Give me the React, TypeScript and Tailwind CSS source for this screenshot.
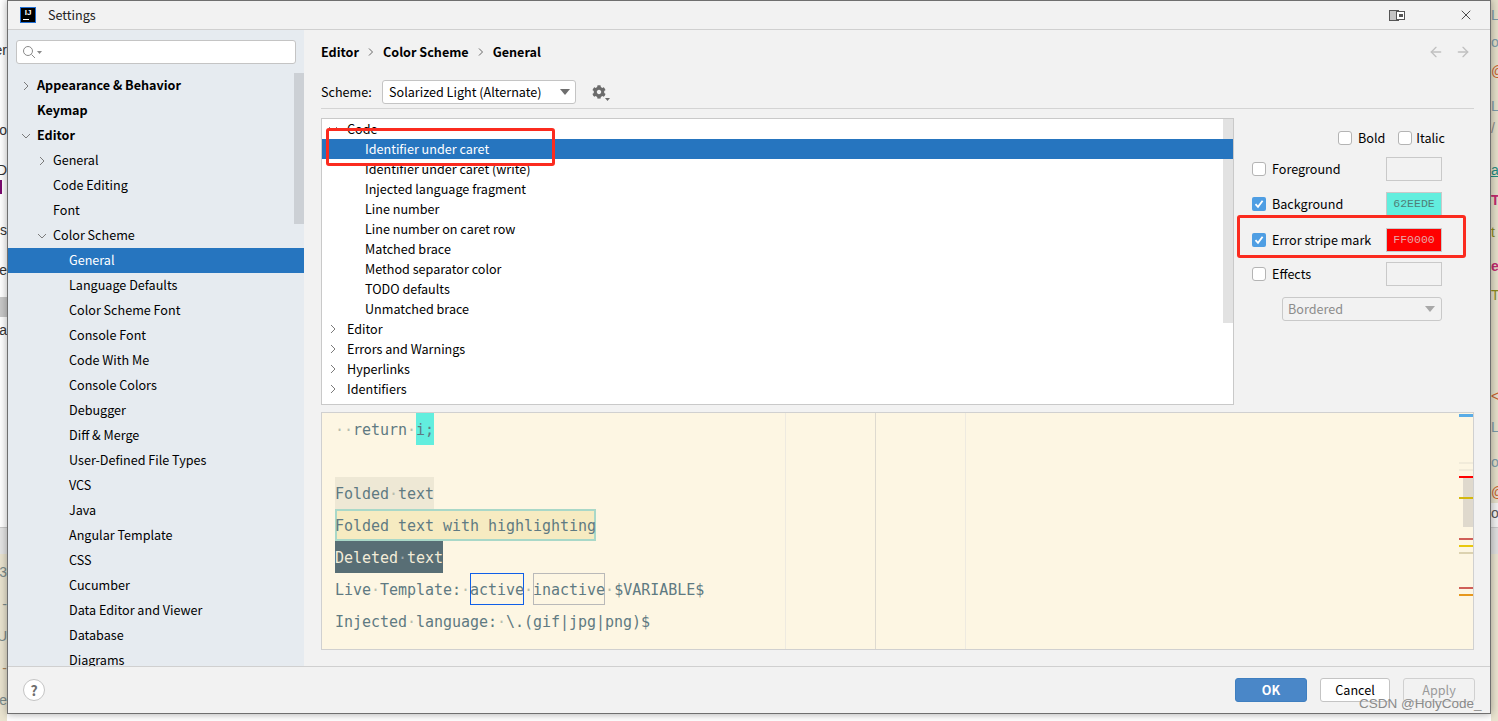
import React from "react";
import { ArrowLeft, ArrowRight, X } from "lucide-react";
import { FaCog } from "react-icons/fa";

const Right = ({ className = "" }: { className?: string }) => (
  <svg width="10" height="10" viewBox="0 0 10 10" className={className}><path d="M3 1 L7 5 L3 9" fill="none" stroke="#7b7b7b" strokeWidth="1" /></svg>
);
const Down = ({ className = "" }: { className?: string }) => (
  <svg width="10" height="10" viewBox="0 0 10 10" className={className}><path d="M1 3 L5 7 L9 3" fill="none" stroke="#7b7b7b" strokeWidth="1" /></svg>
);
const Caret = ({ color = "#6e6e6e" }: { color?: string }) => (
  <svg width="10" height="6" viewBox="0 0 10 6"><path d="M0 0 H10 L5 6 Z" fill={color} /></svg>
);

const Check = ({ on = false }: { on?: boolean }) =>
  on ? (
    <span className="flex h-[14px] w-[14px] shrink-0 items-center justify-center rounded-[2px] bg-[#4f9ee3]">
      <svg width="12" height="12" viewBox="0 0 12 12"><path d="M2.5 6.2 L5 8.8 L9.6 2.8" fill="none" stroke="#fff" strokeWidth="1.8" /></svg>
    </span>
  ) : (
    <span className="h-[14px] w-[14px] shrink-0 rounded-[3px] border border-[#b4b4b4] bg-white" />
  );

type Side = { t: string; l: 0 | 1 | 2; b?: boolean; c?: "r" | "d"; sel?: boolean };
const side: Side[] = [
  { t: "Appearance & Behavior", l: 0, b: true, c: "r" },
  { t: "Keymap", l: 0, b: true },
  { t: "Editor", l: 0, b: true, c: "d" },
  { t: "General", l: 1, c: "r" },
  { t: "Code Editing", l: 1 },
  { t: "Font", l: 1 },
  { t: "Color Scheme", l: 1, c: "d" },
  { t: "General", l: 2, sel: true },
  { t: "Language Defaults", l: 2 },
  { t: "Color Scheme Font", l: 2 },
  { t: "Console Font", l: 2 },
  { t: "Code With Me", l: 2 },
  { t: "Console Colors", l: 2 },
  { t: "Debugger", l: 2 },
  { t: "Diff & Merge", l: 2 },
  { t: "User-Defined File Types", l: 2 },
  { t: "VCS", l: 2 },
  { t: "Java", l: 2 },
  { t: "Angular Template", l: 2 },
  { t: "CSS", l: 2 },
  { t: "Cucumber", l: 2 },
  { t: "Data Editor and Viewer", l: 2 },
  { t: "Database", l: 2 },
  { t: "Diagrams", l: 2 },
];

type TreeRow = { t: string; c?: "r" | "d"; child?: boolean; sel?: boolean };
const tree: TreeRow[] = [
  { t: "Code", c: "d" },
  { t: "Identifier under caret", child: true, sel: true },
  { t: "Identifier under caret (write)", child: true },
  { t: "Injected language fragment", child: true },
  { t: "Line number", child: true },
  { t: "Line number on caret row", child: true },
  { t: "Matched brace", child: true },
  { t: "Method separator color", child: true },
  { t: "TODO defaults", child: true },
  { t: "Unmatched brace", child: true },
  { t: "Editor", c: "r" },
  { t: "Errors and Warnings", c: "r" },
  { t: "Hyperlinks", c: "r" },
  { t: "Identifiers", c: "r" },
];

const Dot = () => <span className="text-[#b9bdb0]">·</span>;

const Swatch = ({ className, children }: { className: string; children?: React.ReactNode }) => (
  <span className={`flex h-[24px] w-[56px] items-center justify-center border border-[#c9c9c9] font-['Liberation_Mono',monospace] text-[11.5px] ${className}`}>{children}</span>
);

const ColorRow = ({ label, on, swatch, mt }: { label: string; on?: boolean; swatch: React.ReactNode; mt: string }) => (
  <div className={`flex h-[24px] items-center ${mt}`}>
    <Check on={on} />
    <span className="ml-[6px] flex-1">{label}</span>
    {swatch}
  </div>
);

const LeftBits = () => (
  <div className="absolute left-0 top-0 h-[721px] w-[7px] overflow-hidden bg-white font-['Liberation_Sans',sans-serif] text-[14px] text-[#333]">
    <span className="absolute right-0 top-[40px] whitespace-nowrap">er</span>
    <span className="absolute right-0 top-[120px] whitespace-nowrap">o</span>
    <span className="absolute right-0 top-[160px] whitespace-nowrap">ID</span>
    <span className="absolute left-0 top-[180px] h-[14px] w-[2px] bg-[#7a0a6e]" />
    <span className="absolute right-0 top-[220px] whitespace-nowrap">Ps</span>
    <span className="absolute right-0 top-[260px] whitespace-nowrap">re</span>
    <span className="absolute left-0 top-[297px] h-[20px] w-[7px] bg-[#c8c8c8]" />
    <span className="absolute right-0 top-[320px] whitespace-nowrap">ca</span>
    <span className="absolute left-0 top-[527px] h-[27px] w-[7px] border-t border-[#c8c8c8] bg-[#e4e4e4]" />
    <span className="absolute left-0 top-[554px] h-[167px] w-[7px] bg-[#e9e3cf]" />
    <span className="absolute right-0 top-[562px] whitespace-nowrap text-[#7a8a8a]">3</span>
    <span className="absolute right-0 top-[594px] whitespace-nowrap text-[#7a8a8a]">-</span>
    <span className="absolute right-0 top-[626px] whitespace-nowrap text-[#7a8a8a]">U</span>
    <span className="absolute right-0 top-[658px] whitespace-nowrap text-[#a8845a]">-</span>
    <span className="absolute right-0 top-[690px] whitespace-nowrap text-[#7a8a8a]">e</span>
  </div>
);

const RightBits = () => (
  <div className="absolute left-[1491px] top-0 h-[721px] w-[7px] overflow-hidden bg-[#e4dec9] font-['Liberation_Sans',sans-serif] text-[14px]">
    <span className="absolute left-0 top-[5px] text-[#7a9aa8]">L</span>
    <span className="absolute left-0 top-[32px] text-[#7a9aa8]">o</span>
    <span className="absolute left-0 top-[61px] text-[#c8602e]">@</span>
    <span className="absolute left-0 top-[96px] text-[#7a9aa8]">L</span>
    <span className="absolute left-0 top-[118px] text-[#8a8a8a]">/</span>
    <span className="absolute left-0 top-[160px] text-[#1f8a80] underline">av</span>
    <span className="absolute left-0 top-[190px] font-bold text-[#c0286e]">T</span>
    <span className="absolute left-0 top-[222px] text-[#8a8a20]">t</span>
    <span className="absolute left-0 top-[256px] font-bold text-[#c0286e]">e</span>
    <span className="absolute left-0 top-[285px] text-[#8a8a20]">T</span>
    <span className="absolute left-0 top-[386px] text-[#c8602e]">&lt;</span>
    <span className="absolute left-0 top-[417px] text-[#7a9aa8]">L</span>
    <span className="absolute left-0 top-[452px] text-[#7a9aa8]">o</span>
    <span className="absolute left-0 top-[482px] text-[#c8602e]">@</span>
    <span className="absolute left-0 top-[503px] h-[24px] w-[7px] bg-[#f1f1f1] text-[#555]">or</span>
    <span className="absolute left-0 top-[527px] h-[27px] w-[7px] border-t border-[#c8c8c8] bg-[#dedede]" />
    <span className="absolute left-0 top-[554px] h-[167px] w-[7px] bg-[#e9e3cf]" />
  </div>
);

export default function App() {
  return (
    <div className="relative h-[721px] w-[1498px] overflow-hidden bg-white font-['Noto_Sans_CJK_SC',sans-serif] text-[12.6px] text-black">
      <LeftBits />
      <RightBits />

      <div className="absolute left-[7px] top-0 flex h-[714px] w-[1484px] flex-col border border-[#6f6f6f] bg-[#f2f2f2] shadow-[0_0_8px_rgba(0,0,0,0.35)]">
        {/* title bar */}
        <div className="flex h-[29px] shrink-0 items-center border-b border-[#d0d0d0] pl-[12px] pr-[16px]">
          <span className="relative flex h-[16px] w-[16px] items-start justify-center border border-[#1f6fd6] bg-black pt-[0px] font-['Liberation_Sans',sans-serif] text-[8px] font-bold leading-[10px] text-white">
            IJ
            <span className="absolute bottom-[2px] left-[2px] h-[1px] w-[6px] bg-white" />
          </span>
          <span className="ml-[12px] text-[#222]">Settings</span>
          <span className="ml-auto mr-[53px] flex items-center">
            <svg width="16" height="11" viewBox="0 0 16 11"><rect x="0.5" y="0.5" width="9" height="10" fill="#fff" stroke="#555" /><path d="M2 1 V10 M4 1 V10 M6 1 V10" stroke="#888" /><rect x="7.5" y="1.5" width="8" height="8" fill="#fff" stroke="#555" /><rect x="10" y="4" width="4" height="3" fill="#555" /></svg>
          </span>
          <X size={16} strokeWidth={1.2} color="#222" />
        </div>

        {/* body */}
        <div className="flex min-h-0 flex-1">
          <aside className="relative flex w-[296px] shrink-0 flex-col overflow-hidden bg-[#e6ebf0]">
            <div className="mx-[8px] mt-[10px] flex h-[24px] shrink-0 items-center gap-[1px] rounded-[3px] border border-[#c4c4c4] bg-white pl-[5px]">
              <svg width="14" height="14" viewBox="0 0 14 14"><circle cx="6" cy="6" r="4.5" fill="none" stroke="#8a8a8a" /><path d="M9.5 9.5 L13 13" stroke="#8a8a8a" /></svg>
              <svg width="5" height="3" viewBox="0 0 5 3"><path d="M0 0 H5 L2.5 3 Z" fill="#8a8a8a" /></svg>
            </div>
            <div className="mt-[9px] flex flex-col">
              {side.map((s, i) => (
                <div key={i} className={`relative flex h-[25px] shrink-0 items-center ${s.sel ? "bg-[#2675bf] text-white" : ""}`}>
                  {s.c === "r" && <Right className={`absolute ${s.l === 0 ? "left-[13px]" : "left-[29px]"}`} />}
                  {s.c === "d" && <Down className={`absolute ${s.l === 0 ? "left-[13px]" : "left-[29px]"}`} />}
                  <span className={`${s.l === 0 ? "pl-[29px]" : s.l === 1 ? "pl-[45px]" : "pl-[61px]"} ${s.b ? "font-bold" : ""}`}>{s.t}</span>
                </div>
              ))}
            </div>
            <span className="absolute left-[286px] top-[43px] h-[151px] w-[10px] bg-[#ccd0d5]" />
          </aside>

          <main className="flex min-w-0 flex-1 flex-col pl-[17px] pr-[16px]">
            <div className="mt-[12px] flex h-[20px] items-center font-bold">
              <span>Editor</span>
              <svg width="6" height="8" viewBox="0 0 6 8" className="mx-[9px]"><path d="M1 0.5 L4.5 4 L1 7.5" fill="none" stroke="#666" /></svg>
              <span>Color Scheme</span>
              <svg width="6" height="8" viewBox="0 0 6 8" className="mx-[9px]"><path d="M1 0.5 L4.5 4 L1 7.5" fill="none" stroke="#666" /></svg>
              <span>General</span>
              <span className="ml-auto flex items-center gap-[11px] pr-[3px]">
                <ArrowLeft size={16} strokeWidth={2} color="#c0c0c0" />
                <ArrowRight size={16} strokeWidth={2} color="#c0c0c0" />
              </span>
            </div>

            <div className="mt-[18px] flex h-[24px] items-center">
              <span className="w-[61px]">Scheme:</span>
              <div className="flex h-[24px] w-[194px] items-center justify-between rounded-[3px] border border-[#c4c4c4] bg-white pl-[6px] pr-[5px]">
                <span>Solarized Light (Alternate)</span>
                <Caret />
              </div>
              <span className="relative ml-[16px] flex items-center">
                <FaCog size={14} color="#6b6b6b" />
                <svg width="5" height="3" viewBox="0 0 5 3" className="absolute left-[13px] top-[13px]"><path d="M0 0 H5 L2.5 3 Z" fill="#6b6b6b" /></svg>
              </span>
            </div>

            <div className="mt-[4px] h-[1px] shrink-0 bg-[#d4d4d4]" />

            <div className="mt-[9px] flex h-[287px] shrink-0">
              <div className="relative h-[287px] w-[913px] shrink-0 overflow-hidden border border-[#c9c9c9] bg-white">
                <span className="absolute right-0 top-0 h-[204px] w-[10px] bg-[#e2e2e2]" />
                {tree.map((r, i) => (
                  <div key={i} className={`relative flex h-[20px] items-center ${r.sel ? "bg-[#2675bf] text-white" : ""}`}>
                    {r.c === "r" && <Right className="absolute left-[6px]" />}
                    {r.c === "d" && <Down className="absolute left-[6px]" />}
                    <span className={r.child ? "pl-[43px]" : "pl-[25px]"}>{r.t}</span>
                  </div>
                ))}
              </div>

              <div className="flex flex-1 flex-col pl-[18px] pr-[32px]">
                <div className="mt-[12px] flex h-[16px] items-center justify-end">
                  <Check />
                  <span className="ml-[6px] mr-[13px]">Bold</span>
                  <Check />
                  <span className="ml-[4px] mr-[-3px]">Italic</span>
                </div>
                <ColorRow mt="mt-[11px]" label="Foreground" swatch={<Swatch className="bg-[#f2f2f2]" />} />
                <ColorRow mt="mt-[11px]" label="Background" on swatch={<Swatch className="bg-[#62eede] text-[#4f8078]">62EEDE</Swatch>} />
                <ColorRow mt="mt-[12px]" label="Error stripe mark" on swatch={<Swatch className="bg-[#ff0000] text-[#e8a8a8]">FF0000</Swatch>} />
                <ColorRow mt="mt-[10px]" label="Effects" swatch={<Swatch className="bg-[#f2f2f2]" />} />
                <div className="ml-[30px] mt-[11px] flex h-[24px] items-center justify-between rounded-[3px] border border-[#c9c9c9] pl-[5px] pr-[6px] text-[#8c8c8c]">
                  <span>Bordered</span>
                  <Caret color="#a8a8a8" />
                </div>
              </div>
            </div>

            {/* preview */}
            <div className="relative mt-[7px] h-[238px] shrink-0 overflow-hidden border border-[#d0d0d0] bg-[#fdf6e3] font-['DejaVu_Sans_Mono',monospace] text-[15px] leading-[34px] tracking-[-0.03px] text-[#5f7a82]">
              <span className="absolute left-[463px] top-0 h-full w-[1px] bg-[#eeeae0]" />
              <span className="absolute left-[553px] top-0 h-full w-[1px] bg-[#dedad0]" />
              <span className="absolute left-[643px] top-0 h-full w-[1px] bg-[#eeeae0]" />

              <div className="relative flex flex-col whitespace-pre pl-[13px]">
                <div className="flex h-[32px]"><Dot /><Dot /><span>return</span><Dot /><span className="h-[32px] bg-[#62eede]">i;</span></div>
                <div className="h-[32px]" />
                <div className="flex h-[32px]"><span className="h-[32px] bg-[#eee8d5]">Folded<Dot />text</span></div>
                <div className="flex h-[32px]"><span className="h-[32px] bg-[#f6ebc1] shadow-[inset_0_0_0_2px_#a9d8c8]">Folded text with highlighting</span></div>
                <div className="flex h-[32px]"><span className="h-[32px] bg-[#586e75] text-[#f3ecd8]">Deleted<span className="text-[#9aa8a8]">·</span>text</span></div>
                <div className="flex h-[32px]"><span>Live</span><Dot /><span>Template:</span><Dot /><span className="h-[32px] shadow-[inset_0_0_0_1px_#0f5fe8]">active</span><Dot /><span className="h-[32px] shadow-[inset_0_0_0_1px_#b9b9b9]">inactive</span><Dot /><span>$VARIABLE$</span></div>
                <div className="flex h-[32px]"><span>Injected</span><Dot /><span>language:</span><Dot /><span>\.(gif|jpg|png)$</span></div>
              </div>

              <span className="absolute right-0 top-[64px] h-[50px] w-[10px] bg-[#dfd9cd]" />
              <span className="absolute right-0 top-[1px] h-[3px] w-[14px] bg-[#5aace6]" />
              <span className="absolute right-0 top-[49px] h-[2px] w-[14px] bg-[#f1ebda]" />
              <span className="absolute right-0 top-[56px] h-[2px] w-[14px] bg-[#f1ebda]" />
              <span className="absolute right-0 top-[63px] h-[2px] w-[14px] bg-[#ff0000]" />
              <span className="absolute right-0 top-[84px] h-[2px] w-[14px] bg-[#d4b80f]" />
              <span className="absolute right-0 top-[125px] h-[2px] w-[14px] bg-[#cf5f58]" />
              <span className="absolute right-0 top-[132px] h-[2px] w-[14px] bg-[#e8c80e]" />
              <span className="absolute right-0 top-[139px] h-[2px] w-[14px] bg-[#dcd2b0]" />
              <span className="absolute right-0 top-[174px] h-[2px] w-[14px] bg-[#cf5f58]" />
              <span className="absolute right-0 top-[181px] h-[2px] w-[14px] bg-[#e6981e]" />
            </div>
          </main>
        </div>

        {/* footer */}
        <div className="flex h-[47px] shrink-0 items-center border-t border-[#d0d0d0] pl-[15px] pr-[15px]">
          <span className="flex h-[22px] w-[22px] items-center justify-center rounded-full border border-[#c4c4c4] bg-white text-[14px] font-bold text-[#6e6e6e]">?</span>
          <button className="ml-auto h-[24px] w-[72px] rounded-[3px] border border-[#3f7fc0] bg-[#4a87c8] font-bold text-white">OK</button>
          <button className="ml-[13px] h-[24px] w-[70px] rounded-[3px] border border-[#c4c4c4] bg-white">Cancel</button>
          <button className="ml-[13px] h-[24px] w-[72px] rounded-[3px] border border-[#d0d0d0] text-[#9a9a9a]">Apply</button>
        </div>
      </div>

      {/* annotations */}
      <span className="absolute left-[326px] top-[128px] h-[38px] w-[229px] rounded-[3px] border-[3px] border-[#fb2b1f]" />
      <span className="absolute left-[1237px] top-[215px] h-[43px] w-[229px] rounded-[3px] border-[3px] border-[#fb2b1f]" />
      <span className="absolute left-[1359px] top-[695px] font-['Liberation_Sans',sans-serif] text-[13.5px] leading-[18px] text-[#8a8a8a]">CSDN @HolyCode_</span>
    </div>
  );
}
